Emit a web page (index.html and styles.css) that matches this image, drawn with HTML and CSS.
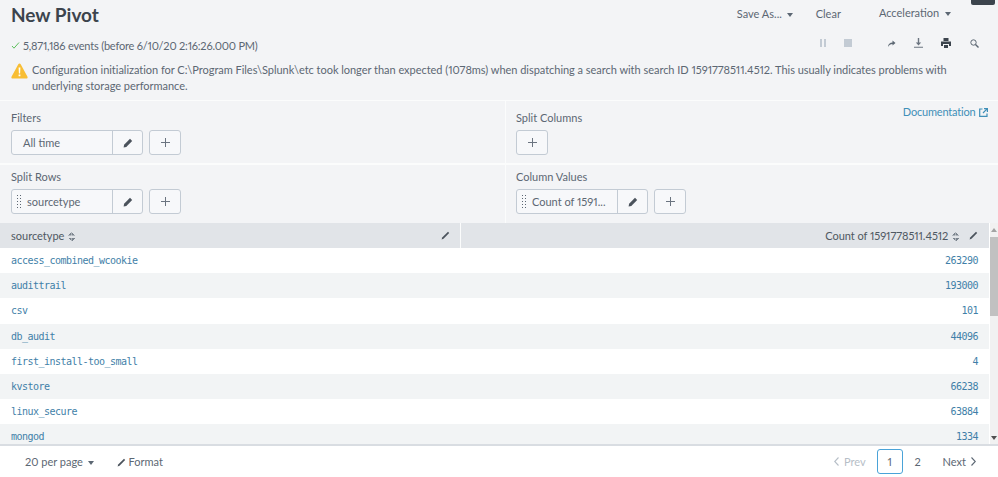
FILE: index.html
```html
<!DOCTYPE html>
<html lang="en">
<head>
<meta charset="utf-8">
<title>New Pivot</title>
<link rel="stylesheet" href="styles.css">
</head>
<body>
<div class="page">
  <header class="head">
    <div class="title-row">
      <h1 class="title">New Pivot</h1>
      <div class="actions">
        <span class="action save">Save As... <i class="caret"></i></span>
        <span class="action clear">Clear</span>
        <span class="action accel">Acceleration <i class="caret"></i></span>
      </div>
    </div>
    <div class="status-row">
      <div class="status">
        <svg class="check" width="9" height="9" viewBox="0 0 9 9"><path d="M1 5l2 2.2L8 1.5" fill="none" stroke="#5cc05c" stroke-width="1"/></svg>
        <span class="status-text">5,871,186 events (before 6/10/20 2:16:26.000 PM)</span>
      </div>
      <div class="tools">
        <svg class="tool pause" width="8" height="8" viewBox="0 0 8 8"><path d="M1 0h2v8H1zM5 0h2v8H5z" fill="#c3cbd4"/></svg>
        <svg class="tool stop" width="8" height="8" viewBox="0 0 8 8"><path d="M0 0h8v8H0z" fill="#c3cbd4"/></svg>
        <svg class="tool share" width="9" height="9" viewBox="0 0 9 9"><path d="M1 8C1 5 3 3.5 5.5 3.5V1.5L8.500 4 5.500 6.500V5C3.500 5 2 6 1 8z" fill="#5c6773"/></svg>
        <svg class="tool dl" width="9" height="10" viewBox="0 0 9 10"><path d="M3.800 0h1.400v4.500h2L4.500 7.500 1.800 4.500h2zM0 8.800h9v1H0z" fill="#6b7480"/></svg>
        <svg class="tool print" width="10" height="10" viewBox="0 0 10 10"><path d="M2.500 0h5v3h-5zM0 3.500h10V8H8V6H2v2H0zM3 7h4v3H3z" fill="#3c444d"/></svg>
        <svg class="tool find" width="9" height="9" viewBox="0 0 9 9"><circle cx="3.500" cy="3.500" r="2.700" fill="none" stroke="#5c6773" stroke-width="1"/><path d="M5.500 5.500L8.500 8.500" stroke="#5c6773" stroke-width="1.400"/></svg>
      </div>
    </div>
    <div class="warning">
      <svg class="warn-icon" width="17" height="16" viewBox="0 0 17 16"><path d="M8.500 .5c.5 0 .9.300 1.200.8l6.800 12.400c.4.800-.1 1.800-1 1.800H1.500c-.9 0-1.400-1-1-1.800L7.300 1.300c.3-.5.700-.8 1.200-.8z" fill="#f8be34"/><path d="M7.600 4.500h1.800l-.3 6H7.900zM7.600 11.500h1.800v1.800H7.600z" fill="#fff"/></svg>
      <p class="warn-text">Configuration initialization for C:\Program Files\Splunk\etc took longer than expected (1078ms) when dispatching a search with search ID 1591778511.4512. This usually indicates problems with underlying storage performance.</p>
    </div>
  </header>

  <section class="builder">
    <div class="cell top">
      <div class="label">Filters</div>
      <div class="controls">
        <div class="pill"><span class="pill-text plain">All time</span><span class="pill-edit"><svg class="pen" width="10" height="10" viewBox="0 0 10 10"><path d="M7 .8l2.200 2.200L3.300 8.900 .6 9.400 1.100 6.700z" fill="#4b535c"/></svg></span></div>
        <button class="add"><svg width="9" height="9" viewBox="0 0 9 9"><path d="M4.500 0v9M0 4.500h9" stroke="#6b7480" stroke-width="1"/></svg></button>
      </div>
    </div>
    <div class="cell top right">
      <div class="label">Split Columns</div>
      <div class="controls"><button class="add"><svg width="9" height="9" viewBox="0 0 9 9"><path d="M4.500 0v9M0 4.500h9" stroke="#6b7480" stroke-width="1"/></svg></button></div>
      <a class="doc">Documentation <svg width="9" height="9" viewBox="0 0 9 9"><path d="M3.500 1H.7v7.300H8V5.500M5 .6h3.400V4M8.300.7L4 5" fill="none" stroke="#3f8fb8" stroke-width="1.200"/></svg></a>
    </div>
    <div class="cell bottom">
      <div class="label">Split Rows</div>
      <div class="controls">
        <div class="pill"><i class="grip"></i><span class="pill-text">sourcetype</span><span class="pill-edit"><svg class="pen" width="10" height="10" viewBox="0 0 10 10"><path d="M7 .8l2.200 2.200L3.300 8.900 .6 9.400 1.100 6.700z" fill="#4b535c"/></svg></span></div>
        <button class="add"><svg width="9" height="9" viewBox="0 0 9 9"><path d="M4.500 0v9M0 4.500h9" stroke="#6b7480" stroke-width="1"/></svg></button>
      </div>
    </div>
    <div class="cell bottom right">
      <div class="label">Column Values</div>
      <div class="controls">
        <div class="pill"><i class="grip"></i><span class="pill-text">Count of 1591...</span><span class="pill-edit"><svg class="pen" width="10" height="10" viewBox="0 0 10 10"><path d="M7 .8l2.200 2.200L3.300 8.900 .6 9.400 1.100 6.700z" fill="#4b535c"/></svg></span></div>
        <button class="add"><svg width="9" height="9" viewBox="0 0 9 9"><path d="M4.500 0v9M0 4.500h9" stroke="#6b7480" stroke-width="1"/></svg></button>
      </div>
    </div>
  </section>

  <section class="results">
    <div class="table-wrap">
      <div class="thead">
        <div class="th first">
          <span>sourcetype <i class="sort"></i></span>
          <svg class="slim" width="9" height="9" viewBox="0 0 9 9"><path d="M7 .8l1.200 1.200L2.500 7.800 .6 8.400 1.200 6.500z" fill="#4b535c"/></svg>
        </div>
        <div class="th second">
          <span class="count-label">Count of 1591778511.4512 <i class="sort"></i></span>
          <svg class="slim" width="9" height="9" viewBox="0 0 9 9"><path d="M7 .8l1.200 1.200L2.500 7.800 .6 8.400 1.200 6.500z" fill="#4b535c"/></svg>
        </div>
      </div>
      <div class="row"><span>access_combined_wcookie</span><span>263290</span></div>
      <div class="row alt"><span>audittrail</span><span>193000</span></div>
      <div class="row"><span>csv</span><span>101</span></div>
      <div class="row alt"><span>db_audit</span><span>44096</span></div>
      <div class="row"><span>first_install-too_small</span><span>4</span></div>
      <div class="row alt"><span>kvstore</span><span>66238</span></div>
      <div class="row"><span>linux_secure</span><span>63884</span></div>
      <div class="row alt"><span>mongod</span><span>1334</span></div>
    </div>
    <div class="scrollbar">
      <span class="arrow up"></span>
      <span class="thumb"></span>
      <span class="arrow down"></span>
    </div>
  </section>

  <footer class="foot">
    <div class="foot-left">
      <span class="per">20 per page <i class="caret"></i></span>
      <span class="format"><svg width="9" height="9" viewBox="0 0 9 9"><path d="M7 .8l1.200 1.200L2.500 7.800 .6 8.400 1.200 6.500z" fill="#4b535c"/></svg> Format</span>
    </div>
    <div class="pager">
      <span class="prev"><svg width="5" height="9" viewBox="0 0 5 9"><path d="M4.500.5L.7 4.500l3.800 4" fill="none" stroke="#b6bec7" stroke-width="1.100"/></svg>Prev</span>
      <span class="page-no current">1</span>
      <span class="page-no">2</span>
      <span class="next">Next<svg width="5" height="9" viewBox="0 0 5 9"><path d="M.5.5l3.800 4-3.800 4" fill="none" stroke="#5c6773" stroke-width="1.100"/></svg></span>
    </div>
  </footer>
</div>
<div class="corner"></div>
</body>
</html>
```
FILE: styles.css
```css
* { box-sizing: border-box; }
html, body { margin: 0; padding: 0; }
body {
  width: 998px;
  height: 477px;
  overflow: hidden;
  background: #fff;
  font-family: Lato, "Liberation Sans", sans-serif;
  font-size: 11px;
  font-variant-numeric: proportional-nums;
  color: #5c6773;
  position: relative;
}
.page { display: flex; flex-direction: column; height: 477px; }

.head { height: 101px; background: #f3f4f6; border-bottom: 1px solid #fbfcfc; padding: 0 11px; flex: none; }
.title-row { display: flex; justify-content: space-between; height: 30px; }
.title { margin: 3px 0 0; font-size: 19px; line-height: 24px; font-weight: 700; color: #3c444d; }
.actions { display: flex; align-items: center; height: 26px; }
.action { white-space: nowrap; }
.save { margin-right: 23px; }
.clear { margin-right: 38px; }
.accel { margin-right: 36px; margin-top: -1px; }
.caret { display: inline-block; width: 0; height: 0; border-left: 3.500px solid transparent; border-right: 3.500px solid transparent; border-top: 4px solid #5c6773; vertical-align: 1px; margin-left: 2px; }
.accel .caret { margin-left: 3px; }

.status-row { display: flex; justify-content: space-between; height: 26px; padding-top: 9px; }
.status { display: flex; align-items: center; gap: 3px; height: 14px; margin-top: -1px; }
.status-text { letter-spacing: -.2px; }
.tools { display: flex; align-items: center; height: 8px; margin-right: 8px; }
.tool { display: block; }
.pause { margin-right: 17px; }
.stop { margin-right: 35px; }
.share { margin-right: 18px; }
.dl { margin-right: 18px; }
.print { margin-right: 19px; }

.warning { display: flex; gap: 4px; align-items: flex-start; padding-top: 6px; }
.warn-icon { flex: none; margin-top: 1px; }
.warn-text { margin: 0; width: 925px; font-size: 11px; line-height: 16px; letter-spacing: -.03px; }

.builder { display: grid; grid-template-columns: 505px 1fr; grid-template-rows: 64px 58px; background: #f3f4f6; flex: none; }
.cell { padding: 9px 11px 0; position: relative; }
.cell.top { border-bottom: 2px solid #fbfcfc; }
.cell.bottom { padding-top: 4px; }
.right { border-left: 1px solid #fbfcfc; padding-left: 10px; }
.label { font-size: 11px; line-height: 16px; height: 16px; margin-bottom: 4px; }
.controls { display: flex; gap: 6px; }
.pill { display: flex; height: 25px; width: 132px; background: #f7f8fa; border: 1px solid #c3cbd4; border-radius: 3px; align-items: stretch; }
.pill-text { flex: 1; display: flex; align-items: center; white-space: nowrap; overflow: hidden; padding-left: 5px; }
.pill-text.plain { padding-left: 11px; }
.pill-edit { width: 30px; border-left: 1px solid #c3cbd4; display: flex; align-items: center; justify-content: center; flex: none; }
.grip { width: 6px; margin: 4px 0 4px 4px; flex: none; background-image: radial-gradient(circle, #5c6773 .8px, transparent .9px); background-size: 3px 3px; }
.add { width: 32px; height: 25px; padding: 0; background: #f7f8fa; border: 1px solid #c3cbd4; border-radius: 3px; display: flex; align-items: center; justify-content: center; }
.doc { position: absolute; top: 3px; right: 10px; color: #3f8fb8; font-size: 11px; line-height: 16px; letter-spacing: -.2px; }
.doc svg { vertical-align: -1px; margin-left: 1px; }

.results { flex: 1; min-height: 0; display: flex; overflow: hidden; border-bottom: 2px solid #d9dde2; background: #fff; }
.table-wrap { flex: 1; min-width: 0; }
.thead { display: flex; height: 25px; background: #e1e4e8; color: #4f5862; align-items: center; }
.th { display: flex; align-items: center; height: 25px; }
.first { width: 461px; flex: none; justify-content: space-between; padding: 0 10px 0 11px; border-right: 1px solid #fbfcfc; }
.second { flex: 1; justify-content: flex-end; padding-right: 11px; }
.second .slim { margin-left: 10px; }
.count-label { letter-spacing: -.05px; }
.sort { display: inline-block; width: 7px; height: 9px; vertical-align: -1px; margin-left: 1px;
  background:
    linear-gradient(to bottom right, transparent 50%, #7b848e 51%) 0 0 / 3.500px 3.500px no-repeat,
    linear-gradient(to bottom left, transparent 50%, #7b848e 51%) 3.500px 0 / 3.500px 3.500px no-repeat,
    linear-gradient(to top right, transparent 50%, #7b848e 51%) 0 5.500px / 3.500px 3.500px no-repeat,
    linear-gradient(to top left, transparent 50%, #7b848e 51%) 3.500px 5.500px / 3.500px 3.500px no-repeat;
}
.row { display: flex; justify-content: space-between; align-items: center; height: 25.2px; padding: 0 11px; background: #fff; color: #3f7fa8; font-family: "DejaVu Sans Mono", "Liberation Mono", monospace; font-size: 10px; letter-spacing: -.52px; }
.alt { background: #f2f4f5; }

.scrollbar { width: 9px; flex: none; background: #f1f1f1; display: flex; flex-direction: column; align-items: center; border-left: 1px solid #fff; }
.arrow { width: 0; height: 0; border-left: 3px solid transparent; border-right: 3px solid transparent; flex: none; }
.up { border-bottom: 4px solid #a3a3a3; margin: 5px 0 5px; }
.thumb { width: 8px; height: 79px; background: #c1c1c1; flex: none; }
.down { border-top: 4px solid #505050; margin-top: auto; margin-bottom: 4px; }

.foot { height: 31px; flex: none; display: flex; justify-content: space-between; align-items: center; padding: 0 22px 0 25px; background: #fff; }
.foot-left { display: flex; gap: 23px; }
.foot-left svg { vertical-align: -1px; }
.pager { display: flex; align-items: center; }
.prev { color: #b6bec7; margin-right: 11px; display: flex; align-items: center; gap: 5px; }
.page-no { width: 26px; height: 25px; display: flex; align-items: center; justify-content: center; }
.page-no.current { border: 1px solid #4aa3d8; border-radius: 3px; color: #5c6773; margin-right: 2px; }
.next { margin-left: 12px; display: flex; align-items: center; gap: 5px; }

.corner { position: absolute; top: 0; left: 971px; width: 24px; height: 5px; background: #3c444d; border-radius: 0 0 2px 2px; }
```
